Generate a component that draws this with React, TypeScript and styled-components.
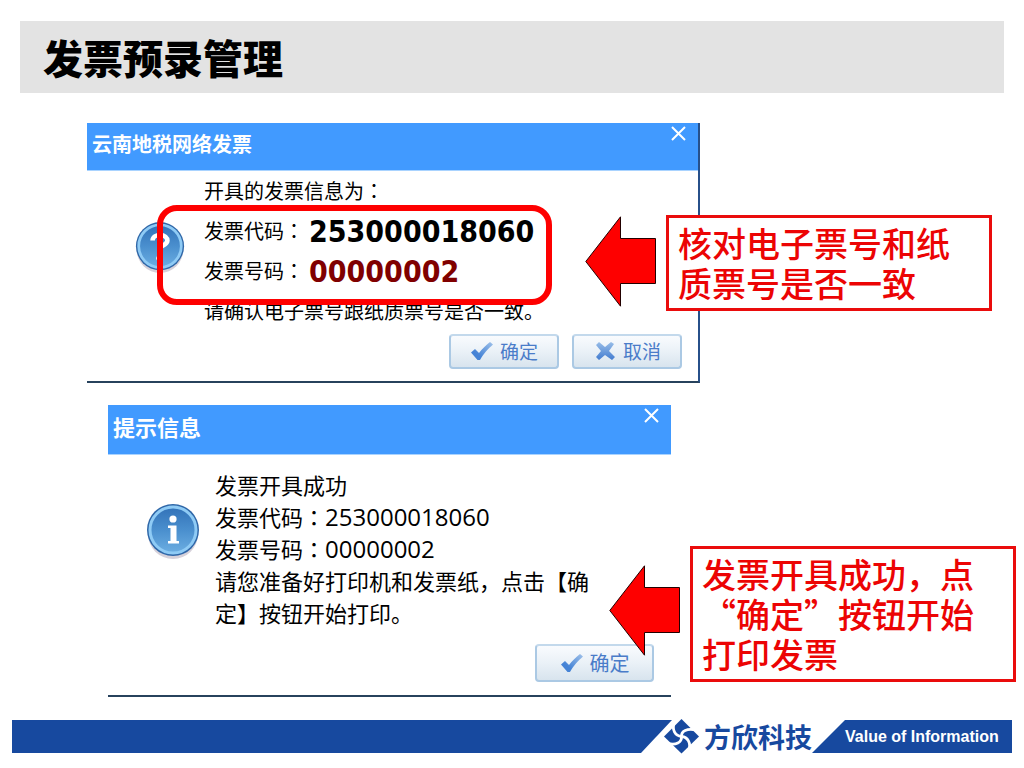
import React from "react";
import styled, { createGlobalStyle } from "styled-components";

const GlobalStyle = createGlobalStyle`
  * { box-sizing: border-box; }
  body {
    margin: 0;
    background: #fff;
    color: #000;
    font-family: "Open Sans", "Noto Sans CJK SC", sans-serif;
    text-spacing-trim: space-all;
  }
`;

const Slide = styled.main`
  display: flex;
  flex-direction: column;
  padding: 21px 0 15px;
`;

const SlideHeader = styled.header`
  margin: 0 20px 30px;
  padding: 16px 23px;
  background: #e3e3e3;
`;

const SlideTitle = styled.h1`
  margin: 0;
  font: 900 40px/40px "Noto Sans CJK SC", sans-serif;
`;

const Scene = styled.section<{ $left: number; $right: number }>`
  display: flex;
  align-items: flex-start;
  margin-bottom: 22px;
  padding: 0 ${(p) => p.$right}px 0 ${(p) => p.$left}px;
`;

const DialogFrame = styled.div<{ $sideBorder?: boolean }>`
  flex: 1;
  min-width: 0;
  background: #fff;
  border-bottom: 2px solid #27425c;
  border-right: ${(p) => (p.$sideBorder ? "2px solid #27508a" : "none")};
`;

const TitleBar = styled.div<{ $height: number }>`
  display: flex;
  justify-content: space-between;
  align-items: flex-start;
  height: ${(p) => p.$height}px;
  padding: 1px 12px 0 5px;
  background: #419aff;
  border-bottom: 1px solid #a9d3ff;
`;

const DialogTitle = styled.h2<{ $size: number }>`
  margin: 0;
  font: 700 ${(p) => p.$size}px/40px "Noto Sans CJK SC", sans-serif;
  color: #fff;
`;

const CloseButton = styled.button`
  display: flex;
  padding: 2px 0 0;
  border: 0;
  background: none;
  color: #fff;
`;

const DialogBody = styled.div<{ $pad: string; $gap: number }>`
  display: flex;
  align-items: flex-start;
  gap: ${(p) => p.$gap}px;
  padding: ${(p) => p.$pad};
`;

const IconSlot = styled.div<{ $top: number }>`
  display: flex;
  margin-top: ${(p) => p.$top}px;
`;

const ConfirmText = styled.div`
  position: relative;
  font-size: 20px;
  line-height: 40px;
  white-space: nowrap;
  p { margin: 0; }
`;

const CodeLine = styled.p`
  display: flex;
`;

/* The Traditional Chinese face centres the full-width colon in its box;
   the zero line height keeps the second face from making its line taller. */
const ColonMark = styled.span`
  font-family: "Noto Sans CJK TC", sans-serif;
  line-height: 0;
`;

const BigNumber = styled.strong<{ $color: string }>`
  margin-left: 5px;
  font: 700 30px/40px "DejaVu Sans Condensed", "DejaVu Sans", sans-serif;
  color: ${(p) => p.$color};
`;

const Highlight = styled.div`
  position: absolute;
  top: 33px;
  left: -47px;
  width: 395px;
  height: 100px;
  border: 6px solid #fe0000;
  border-radius: 20px;
`;

const SuccessText = styled.div`
  flex: 1;
  max-width: 384px;
  font-size: 22px;
  line-height: 32px;
  p { margin: 0; }
`;

const PlainNumber = styled.span`
  font-size: 24px;
  line-height: 0;
`;

const Actions = styled.div<{ $pad: string }>`
  display: flex;
  justify-content: flex-end;
  gap: 13px;
  padding: ${(p) => p.$pad};
`;

const ActionButton = styled.button<{ $large?: boolean }>`
  display: flex;
  align-items: center;
  justify-content: center;
  gap: 6px;
  width: ${(p) => (p.$large ? 119 : 110)}px;
  height: ${(p) => (p.$large ? 38 : 35)}px;
  padding: 0 0 1px;
  border: 2px solid #abc9e4;
  border-top-color: #c3d9ec;
  border-radius: 4px;
  background: linear-gradient(#f9fbfe, #eaf1f7 50%, #d8e4ee);
  color: #4a7cc9;
  font: 400 ${(p) => (p.$large ? 20 : 19)}px/28px "Noto Sans CJK SC", sans-serif;
`;

const Callout = styled.aside<{ $top: number; $overlap: number }>`
  display: flex;
  flex: none;
  align-items: flex-start;
  gap: 10px;
  margin-top: ${(p) => p.$top}px;
  margin-left: -${(p) => p.$overlap}px;
  z-index: 1;
`;

const ArrowSlot = styled.div<{ $top: number }>`
  display: flex;
  margin-top: ${(p) => p.$top}px;
`;

const Note = styled.p`
  width: 326px;
  margin: 0;
  padding: 5px 9px;
  border: 3px solid #ea0c0c;
  background: #fff;
  color: #ec0404;
  font: 500 34px/40px "Noto Sans CJK SC", sans-serif;
`;

const Footer = styled.footer`
  display: flex;
  align-items: stretch;
  height: 33px;
  margin: 1px 12px 0;
`;

const FooterBar = styled.div`
  flex: 1;
  background: #17499f;
  clip-path: polygon(0 0, 100% 0, calc(100% - 31px) 100%, 0 100%);
`;

const Brand = styled.div`
  display: flex;
  align-items: center;
  gap: 5px;
  margin-left: -8px;
  color: #17499f;
  font: 700 27px/33px "Noto Sans CJK SC", sans-serif;
`;

const Tagline = styled.div`
  width: 200px;
  padding-left: 33px;
  background: #17499f;
  clip-path: polygon(33px 0, 100% 0, 100% 100%, 0 100%);
  color: #fff;
  font: 700 16px/34px "Liberation Sans", sans-serif;
  white-space: nowrap;
`;

const CloseIcon = () => (
  <svg width="15" height="15" viewBox="0 0 15 15" fill="none" stroke="currentColor" strokeWidth="2" aria-hidden="true">
    <path d="M1 1 14 14M14 1 1 14" />
  </svg>
);

const Badge = ({ id, size, children }: { id: string; size: number; children: React.ReactNode }) => (
  <svg width={size} height={size + 4} viewBox="0 0 54 58" aria-hidden="true">
    <defs>
      <linearGradient id={id} x1="0" y1="0" x2="0" y2="1">
        <stop offset="0" stopColor="#3272b8" />
        <stop offset="0.5" stopColor="#4a8fce" />
        <stop offset="1" stopColor="#6caee2" />
      </linearGradient>
    </defs>
    <ellipse cx="27" cy="31" rx="25" ry="25" fill="#8a7c96" opacity="0.35" />
    <circle cx="27" cy="27" r="26" fill="#2f67a8" />
    <circle cx="27" cy="27" r="23" fill={`url(#${id})`} stroke="#8fcbf5" strokeWidth="3" />
    {children}
  </svg>
);

const QuestionIcon = () => (
  <Badge id="question-fill" size={50}>
    <path d="M19 21c0-4 4-6 8-6 5 0 8 3 8 6 0 5-7 5-9 9" fill="none" stroke="#fff" strokeWidth="5" />
    <circle cx="26" cy="40" r="3" fill="#fff" />
  </Badge>
);

const InfoIcon = () => (
  <Badge id="info-fill" size={54}>
    <circle cx="27" cy="16" r="3.6" fill="#fff" />
    <path d="M22 22.500h8.500v15.500h2.500v2.500h-11v-2.500h2.500v-13h-2.500z" fill="#fff" />
  </Badge>
);

const CheckIcon = () => (
  <svg width="24" height="20" viewBox="0 0 24 20" aria-hidden="true">
    <defs>
      <linearGradient id="check-fill" x1="0" y1="1" x2="1" y2="0">
        <stop offset="0.3" stopColor="#4583d6" />
        <stop offset="1" stopColor="#a0c2ea" />
      </linearGradient>
    </defs>
    <path d="M1 11.500 5 8l4 4C12 8 16 4 20 1l3 2.500C18 8 14 12 10 19H7.500z" fill="url(#check-fill)" />
  </svg>
);

const CrossIcon = () => (
  <svg width="24" height="20" viewBox="0 0 22 20" aria-hidden="true">
    <defs>
      <linearGradient id="cross-fill" x1="0" y1="0" x2="0" y2="1">
        <stop offset="0" stopColor="#98bde8" />
        <stop offset="1" stopColor="#427cd0" />
      </linearGradient>
    </defs>
    <path d="M2 4 5 1l6 5 6-5 3 2-5 7 6 6-3 3-7-5-6 5-3-3 5-6z" fill="url(#cross-fill)" />
  </svg>
);

const Arrow = () => (
  <svg width="71" height="91" viewBox="0 0 71 91" aria-hidden="true">
    <path d="M.8 45.500 35.500.8V22.500H70.500V67.500H35.500V90.200z" fill="#fe0000" stroke="#200" strokeWidth="1" />
  </svg>
);

const BrandMark = () => (
  <svg width="35" height="35" viewBox="0 0 35 35" aria-hidden="true">
    <path d="M17.500-1 36 17.500 17.500 36-1 17.500z" fill="#fff" />
    <path d="M17.500 0 35 17.500 17.500 34.500 0 17.500z" fill="#17499f" />
    <path d="M32 11C23 9 17 12 17.500 17.500S12 27 3 24" fill="none" stroke="#fff" strokeWidth="2.800" />
    <path d="M10 4C8 11 11 17 17.500 17.500S27 24 25 31" fill="none" stroke="#fff" strokeWidth="2.800" />
  </svg>
);

const Colon = () => <ColonMark lang="zh-TW">：</ColonMark>;

export default function App() {
  return (
    <>
      <GlobalStyle />
      <Slide lang="zh-CN">
        <SlideHeader>
          <SlideTitle>发票预录管理</SlideTitle>
        </SlideHeader>

        <Scene $left={87} $right={32}>
          <DialogFrame $sideBorder role="dialog" aria-labelledby="confirm-title">
            <TitleBar $height={48}>
              <DialogTitle id="confirm-title" $size={20}>云南地税网络发票</DialogTitle>
              <CloseButton type="button" aria-label="关闭"><CloseIcon /></CloseButton>
            </TitleBar>
            <DialogBody $pad="1px 0 0 48px" $gap={19}>
              <IconSlot $top={49}><QuestionIcon /></IconSlot>
              <ConfirmText>
                <p>开具的发票信息为<Colon /></p>
                <CodeLine><span>发票代码<Colon /></span><BigNumber $color="#000">253000018060</BigNumber></CodeLine>
                <CodeLine><span>发票号码<Colon /></span><BigNumber $color="#800000">00000002</BigNumber></CodeLine>
                <p>请确认电子票号跟纸质票号是否一致。</p>
                <Highlight />
              </ConfirmText>
            </DialogBody>
            <Actions $pad="2px 16px 12px 0">
              <ActionButton type="button"><CheckIcon />确定</ActionButton>
              <ActionButton type="button"><CrossIcon />取消</ActionButton>
            </Actions>
          </DialogFrame>
          <Callout $top={92} $overlap={115}>
            <ArrowSlot $top={1}><Arrow /></ArrowSlot>
            <Note>核对电子票号和纸质票号是否一致</Note>
          </Callout>
        </Scene>

        <Scene $left={108} $right={8}>
          <DialogFrame role="dialog" aria-labelledby="success-title">
            <TitleBar $height={50}>
              <DialogTitle id="success-title" $size={22}>提示信息</DialogTitle>
              <CloseButton type="button" aria-label="关闭"><CloseIcon /></CloseButton>
            </TitleBar>
            <DialogBody $pad="14px 0 0 38px" $gap={15}>
              <IconSlot $top={34}><InfoIcon /></IconSlot>
              <SuccessText>
                <p>发票开具成功</p>
                <p>发票代码<Colon /><PlainNumber>253000018060</PlainNumber></p>
                <p>发票号码<Colon /><PlainNumber>00000002</PlainNumber></p>
                <p>请您准备好打印机和发票纸，点击【确定】按钮开始打印。</p>
              </SuccessText>
            </DialogBody>
            <Actions $pad="15px 17px 13px 0">
              <ActionButton type="button" $large><CheckIcon />确定</ActionButton>
            </Actions>
          </DialogFrame>
          <Callout $top={141} $overlap={62}>
            <ArrowSlot $top={19}><Arrow /></ArrowSlot>
            <Note>发票开具成功，点“确定”按钮开始打印发票</Note>
          </Callout>
        </Scene>

        <Footer>
          <FooterBar />
          <Brand><BrandMark />方欣科技</Brand>
          <Tagline>Value of Information</Tagline>
        </Footer>
      </Slide>
    </>
  );
}
